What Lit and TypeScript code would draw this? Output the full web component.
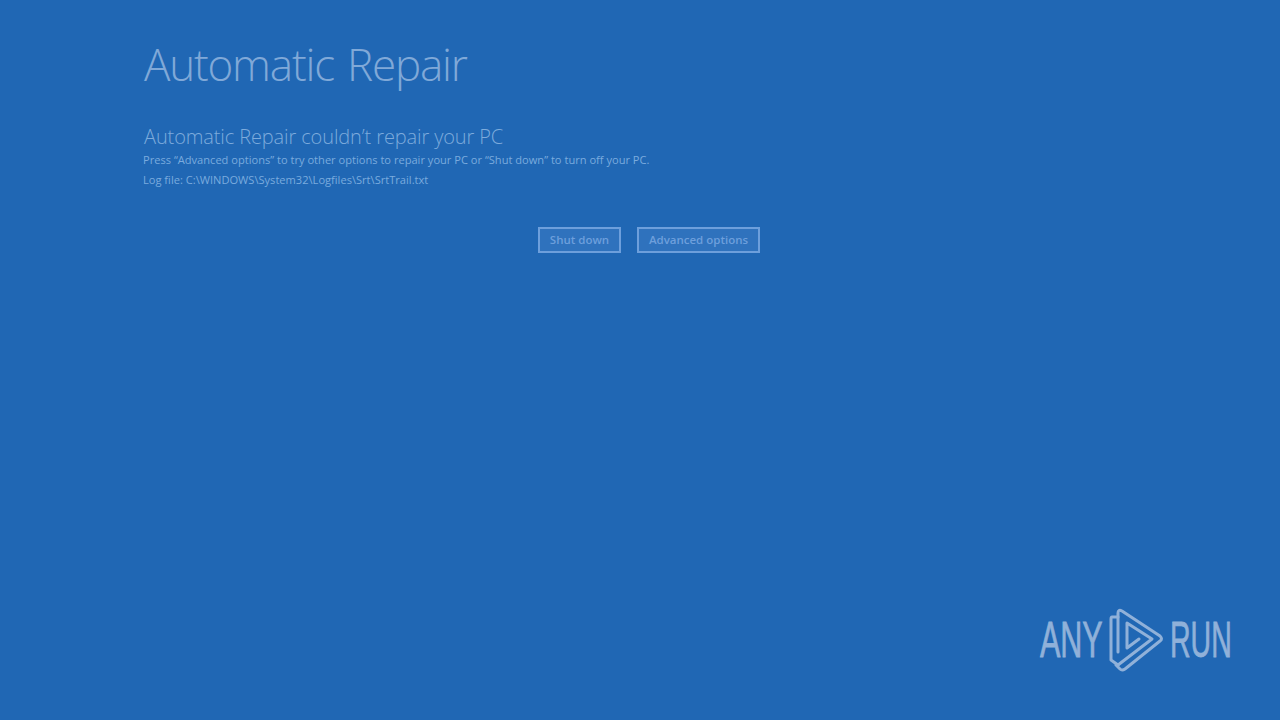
import { LitElement, html, css } from "lit";
import { customElement } from "lit/decorators.js";

@customElement("app-root")
export class AppRoot extends LitElement {
  static styles = css`
    :host { display: block; width: 1280px; height: 720px; overflow: hidden; }
    .screen { position: relative; width: 1280px; height: 720px; box-sizing: border-box; background: #2067b4; padding: 36px 0 0 143px; font-family: "Open Sans", "Liberation Sans", sans-serif; }
    h1 { margin: 0 0 0 1px; font-size: 44px; line-height: 56px; font-weight: 300; color: #80a9d8; white-space: nowrap; letter-spacing: -1.2px; word-spacing: 3px; }
    h2 { margin: 31px 0 0 1px; font-size: 20px; line-height: 28px; font-weight: 300; color: #7dabdc; white-space: nowrap; letter-spacing: -0.12px; }
    p { margin: 0; font-size: 11.1px; line-height: 20px; font-weight: 400; color: #7aabde; white-space: nowrap; }
    .sub { margin-top: -1px; }
    .buttons { display: flex; gap: 16px; margin: 37px 0 0 395px; }
    .btn { box-sizing: border-box; height: 26px; padding-bottom: 2px; border: 2px solid #6d9fdc; background: #2f72bd; color: #6d9fdc; font-size: 11.5px; font-weight: 600; display: flex; align-items: center; justify-content: center; }
    .shut { width: 83px; }
    .adv { width: 123px; }
    .mark { position: absolute; left: 1040px; top: 608px; width: 196px; height: 64px; color: #90b1d9; font-family: "Liberation Sans", sans-serif; font-size: 50px; line-height: 64px; display: flex; align-items: center; -webkit-text-stroke: 0.8px #90b1d9; }
    .word { display: block; white-space: nowrap; transform-origin: left center; flex: none; }
    .any { width: 68px; transform: scaleX(0.61); }
    .run { width: 65px; margin-left: -8px; transform: scaleX(0.57); }
    svg { display: block; width: 70px; height: 64px; flex: none; }
  `;
  render() {
    return html`<div class="screen">
      <h1>Automatic Repair</h1>
      <h2>Automatic Repair couldn’t repair your PC</h2>
      <p class="sub">Press “Advanced options” to try other options to repair your PC or “Shut down” to turn off your PC.</p>
      <p>Log file: C:\\WINDOWS\\System32\\Logfiles\\Srt\\SrtTrail.txt</p>
      <div class="buttons">
        <div class="btn shut">Shut down</div>
        <div class="btn adv">Advanced options</div>
      </div>
      <div class="mark">
        <span class="word any">ANY</span>
        <svg viewBox="0 0 70 64" fill="none" stroke="#90b1d9" stroke-width="3" stroke-linejoin="round" stroke-linecap="round">
          <path d="M10 9 L4 9 Q3 9 3 11 L3 52 L10 57"/>
          <path d="M10 44 L10 5 Q10 1 14 3 L52 28 Q55 31 52 33 L17 61 Q14 63 12 61 L8 57"/>
          <path d="M10 57 L44 31 L19 15 L19 40 L31 31"/>
        </svg>
        <span class="word run">RUN</span>
      </div>
    </div>`;
  }
}
